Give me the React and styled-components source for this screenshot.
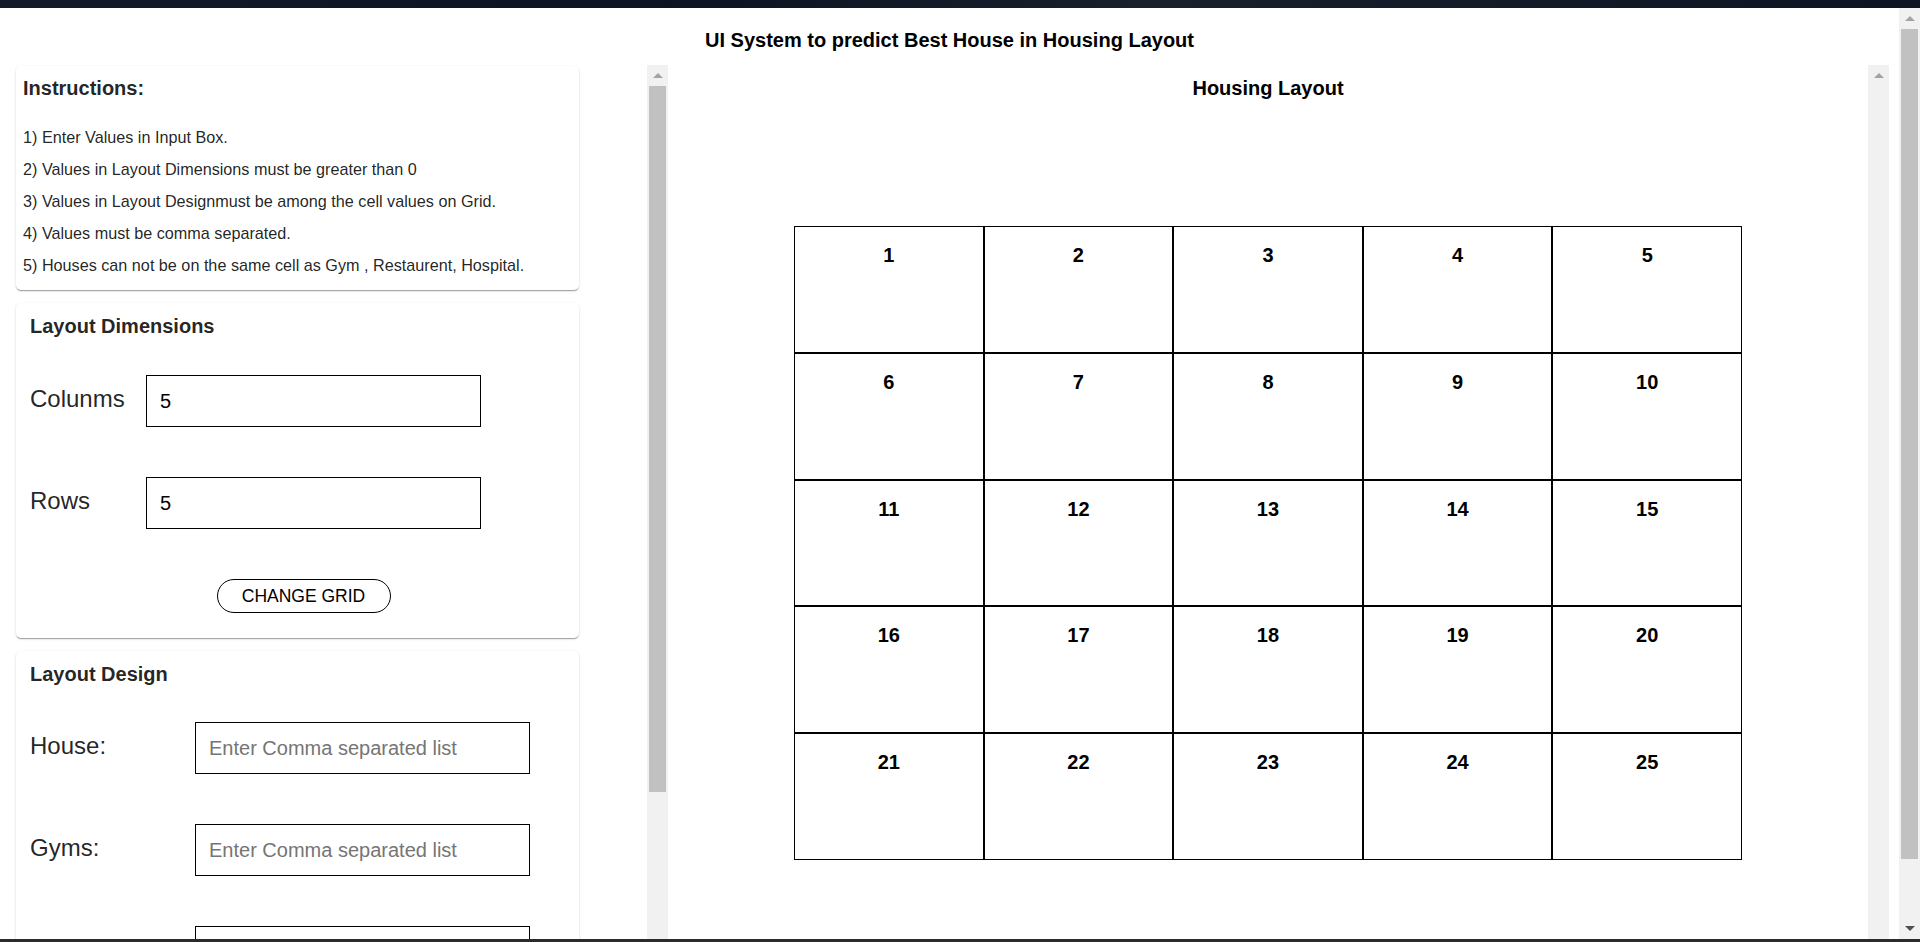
import React from "react";
import styled, { createGlobalStyle } from "styled-components";

const GlobalStyle = createGlobalStyle`
  html, body { margin: 0; padding: 0; height: 100%; overflow: hidden; background: #ffffff; }
  body { font-family: "Liberation Sans", Arial, Helvetica, sans-serif; color: #000; }
  *, *::before, *::after { box-sizing: border-box; }
`;

/* ---------- window chrome ---------- */

const Screen = styled.div`
  display: flex;
  flex-direction: column;
  height: 942px;
  width: 1920px;
`;

const TopStrip = styled.div`
  flex: none;
  height: 8px;
  background: linear-gradient(90deg, #131b28 0%, #0c1421 35%, #18202c 60%, #0e1522 100%);
`;

const BottomStrip = styled.div`
  flex: none;
  height: 3px;
  background: #2b2b2b;
`;

const Viewport = styled.div`
  flex: none;
  height: 931px;
  display: flex;
  background: #fff;
`;

const PageContent = styled.div`
  flex: 1;
  min-width: 0;
  overflow: hidden;
`;

/* ---------- scrollbar drawing ---------- */

const Bar = styled.div`
  flex: none;
  width: 21px;
  align-self: stretch;
  display: flex;
  flex-direction: column;
  background: #f1f1f1;
`;

const ArrowButton = styled.div`
  flex: none;
  height: 21px;
  display: flex;
  align-items: center;
  justify-content: center;
`;

const Arrow = styled.span`
  width: 0;
  height: 0;
  border-left: 5px solid transparent;
  border-right: 5px solid transparent;
  ${(p) =>
    p.$dir === "up"
      ? `border-bottom: 5px solid ${p.$on ? "#505050" : "#a3a3a3"};`
      : `border-top: 5px solid ${p.$on ? "#505050" : "#a3a3a3"};`}
`;

const Track = styled.div`
  flex: 1;
  display: flex;
  flex-direction: column;
  align-items: center;
`;

const Thumb = styled.div`
  flex: none;
  width: 17px;
  height: ${(p) => p.$size}px;
  background: #c1c1c1;
`;

function ScrollBar({ thumb, upOn = false, downOn = true }) {
  return (
    <Bar>
      <ArrowButton>
        <Arrow $dir="up" $on={upOn} />
      </ArrowButton>
      <Track>{thumb ? <Thumb $size={thumb} /> : null}</Track>
      <ArrowButton>
        <Arrow $dir="down" $on={downOn} />
      </ArrowButton>
    </Bar>
  );
}

/* ---------- page ---------- */

const PageTitle = styled.h1`
  margin: 0 0 13px;
  padding-top: 21px;
  font-size: 20px;
  line-height: 23px;
  font-weight: 700;
  text-align: center;
  color: #000;
`;

const Columns = styled.div`
  display: flex;
  padding-right: 10px;
  padding-bottom: 9px;
`;

const SidePanel = styled.aside`
  flex: none;
  width: 668px;
  height: 931px;
  display: flex;
`;

const SideContent = styled.div`
  flex: 1;
  min-width: 0;
  overflow: hidden;
  display: flex;
  flex-direction: column;
  gap: 13px;
  padding: 1px 0 4px;
`;

const Card = styled.section`
  flex: none;
  width: 563px;
  margin-left: 16px;
  background: #fff;
  border-radius: 5px;
  color: rgba(0, 0, 0, 0.87);
  padding: ${(p) => p.$pad || "12px 14px 25px"};
  box-shadow: 0px 2px 1px -1px rgba(0, 0, 0, 0.2), 0px 1px 1px 0px rgba(0, 0, 0, 0.14),
    0px 1px 3px 0px rgba(0, 0, 0, 0.12);
`;

const CardTitle = styled.h2`
  margin: 0;
  font-size: 20px;
  line-height: 23px;
  font-weight: 700;
`;

const InstructionList = styled.div`
  margin-top: 21px;
`;

const InstructionItem = styled.p`
  margin: 0;
  font-size: 16.2px;
  line-height: 32px;
  white-space: nowrap;
`;

const FormRow = styled.div`
  display: flex;
  align-items: flex-start;
  margin-top: ${(p) => p.$top}px;
`;

const FieldLabel = styled.label`
  flex: none;
  width: ${(p) => p.$width}px;
  margin-top: 10px;
  font-size: 24px;
  line-height: 28px;
  color: rgba(0, 0, 0, 0.87);
`;

const TextInput = styled.input`
  flex: none;
  width: 335px;
  height: 52px;
  border: 1px solid #000;
  border-radius: 0;
  padding: 0 13px;
  margin: 0;
  font-family: "Liberation Sans", Arial, Helvetica, sans-serif;
  font-size: 20px;
  color: #000;
  background: #fff;
  outline: none;
  &::placeholder { color: #757575; opacity: 1; }
`;

const ButtonRow = styled.div`
  display: flex;
  justify-content: center;
  padding-left: 12px;
  margin-top: 50px;
`;

const PillButton = styled.button`
  width: 174px;
  height: 34px;
  padding: 0;
  border: 1px solid #000;
  border-radius: 17px;
  background: #fff;
  color: #000;
  font-family: "Liberation Sans", Arial, Helvetica, sans-serif;
  font-size: 17.5px;
  text-transform: uppercase;
  cursor: pointer;
`;

const LayoutPanel = styled.main`
  flex: 1;
  height: 931px;
  display: flex;
`;

const LayoutContent = styled.div`
  flex: 1;
  min-width: 0;
  overflow: hidden;
  display: flex;
  flex-direction: column;
  align-items: center;
  padding-top: 12px;
`;

const GridTitle = styled.h2`
  margin: 0;
  font-size: 20px;
  line-height: 23px;
  font-weight: 700;
  color: #000;
`;

const HouseGrid = styled.div`
  flex: none;
  margin-top: 126px;
  width: 948px;
  display: grid;
  grid-template-columns: repeat(${(p) => p.$cols}, 1fr);
  grid-auto-rows: 126.8px;
`;

const GridCell = styled.div`
  border: 1px solid #000;
  padding-top: 17px;
  text-align: center;
  font-size: 20px;
  line-height: 23px;
  font-weight: 700;
  color: #000;
`;

const instructions = [
  "1) Enter Values in Input Box.",
  "2) Values in Layout Dimensions must be greater than 0",
  "3) Values in Layout Designmust be among the cell values on Grid.",
  "4) Values must be comma separated.",
  "5) Houses can not be on the same cell as Gym , Restaurent, Hospital.",
];

const designFields = ["House:", "Gyms:", "Restaurants:", "Hospitals:"];

export default function App() {
  const cols = 5;
  const rows = 5;
  const cells = Array.from({ length: cols * rows }, (_, i) => i + 1);

  return (
    <Screen>
      <GlobalStyle />
      <TopStrip />
      <Viewport>
        <PageContent>
          <PageTitle>UI System to predict Best House in Housing Layout</PageTitle>
          <Columns>
            <SidePanel>
              <SideContent>
                <Card $pad="11px 7px 9px">
                  <CardTitle>Instructions:</CardTitle>
                  <InstructionList>
                    {instructions.map((t) => (
                      <InstructionItem key={t}>{t}</InstructionItem>
                    ))}
                  </InstructionList>
                </Card>

                <Card>
                  <CardTitle>Layout Dimensions</CardTitle>
                  <FormRow $top={37}>
                    <FieldLabel $width={116}>Colunms</FieldLabel>
                    <TextInput defaultValue="5" />
                  </FormRow>
                  <FormRow $top={50}>
                    <FieldLabel $width={116}>Rows</FieldLabel>
                    <TextInput defaultValue="5" />
                  </FormRow>
                  <ButtonRow>
                    <PillButton>Change Grid</PillButton>
                  </ButtonRow>
                </Card>

                <Card>
                  <CardTitle>Layout Design</CardTitle>
                  {designFields.map((f, i) => (
                    <FormRow key={f} $top={i === 0 ? 36 : 50}>
                      <FieldLabel $width={165}>{f}</FieldLabel>
                      <TextInput placeholder="Enter Comma separated list" />
                    </FormRow>
                  ))}
                  <ButtonRow>
                    <PillButton>Submit</PillButton>
                  </ButtonRow>
                </Card>
              </SideContent>
              <ScrollBar thumb={706} />
            </SidePanel>

            <LayoutPanel>
              <LayoutContent>
                <GridTitle>Housing Layout</GridTitle>
                <HouseGrid $cols={cols}>
                  {cells.map((n) => (
                    <GridCell key={n}>{n}</GridCell>
                  ))}
                </HouseGrid>
              </LayoutContent>
              <ScrollBar downOn={false} />
            </LayoutPanel>
          </Columns>
        </PageContent>
        <ScrollBar thumb={830} />
      </Viewport>
      <BottomStrip />
    </Screen>
  );
}
